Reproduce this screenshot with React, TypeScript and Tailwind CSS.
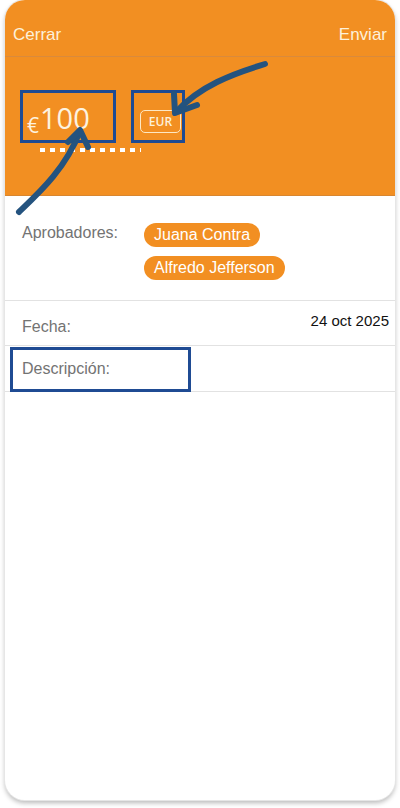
import React from "react";

const ORANGE = "bg-[#f28f22]";

function Chip({ label }: { label: string }) {
  return (
    <span className="inline-flex h-[24px] items-center rounded-full bg-[#f28f22] px-[10px] text-[16px] leading-none text-white">
      {label}
    </span>
  );
}

function Arrows() {
  return (
    <svg
      className="pointer-events-none absolute left-0 top-0"
      width="400"
      height="400"
      viewBox="0 0 400 400"
      fill="none"
      stroke="#24537f"
      strokeWidth="6"
      strokeLinecap="round"
      strokeLinejoin="round"
    >
      <path d="M265 64 C 232 74, 200 86, 176 112" />
      <path d="M174 94 L 175 113 L 197 105" />
      <path d="M19 212 C 40 192, 66 168, 80 131" />
      <path d="M68 142 L 80 130 L 88 147" />
    </svg>
  );
}

export default function App() {
  return (
    <div
      className="relative h-[808px] w-[400px] bg-white"
      style={{ fontFamily: "'Liberation Sans', Arial, sans-serif" }}
    >
      <div className="mx-[5px] flex h-[800px] flex-col overflow-hidden rounded-[20px] bg-white shadow-[0_3px_5px_rgba(0,0,0,0.28)] ring-1 ring-[#e6e6e6]">
        <div className={`${ORANGE} flex h-[57px] items-center justify-between border-b border-[#d98a3c] px-[8px] pt-[14px] text-[17px] text-[#fdf1da]`}>
          <span>Cerrar</span>
          <span>Enviar</span>
        </div>
        <div className={`${ORANGE} relative h-[139px] border-b border-[#d88630] font-['Open_Sans',sans-serif]`}>
          <div className="absolute left-[22px] top-[46px] flex items-end text-[#fdf3e0]">
            <span className="-mb-[4px] text-[21px] leading-none">€</span>
            <span className="ml-[1px] text-[29px] leading-none">100</span>
          </div>
          <div className="absolute left-[135px] top-[53px] flex h-[23px] w-[41px] items-center justify-center rounded-[5px] border border-[#fde8c4] text-[12px] font-semibold text-[#fdf1da]">
            EUR
          </div>
          <div className="absolute left-[35px] top-[91px] h-[4px] w-[101px] bg-[repeating-linear-gradient(90deg,#ffffff_0_5px,transparent_5px_10px)]" />
        </div>
        <div className="flex items-start border-b border-[#e2e2e2] pb-[20px] pl-[17px] pt-[25px]">
          <span className="w-[122px] text-[16px] text-[#737373]">Aprobadores:</span>
          <div className="mt-[2px] flex flex-col items-start gap-[9px]">
            <Chip label="Juana Contra" />
            <Chip label="Alfredo Jefferson" />
          </div>
        </div>
        <div className="flex h-[45px] items-start justify-between border-b border-[#e2e2e2] pl-[17px] pr-[6px]">
          <span className="mt-[14px] text-[16px] text-[#737373]">Fecha:</span>
          <span className="mt-[9px] text-[15px] text-[#111111]">24 oct 2025</span>
        </div>
        <div className="flex h-[46px] items-center border-b border-[#e2e2e2] pl-[17px]">
          <span className="text-[16px] text-[#737373]">Descripción:</span>
        </div>
      </div>
      <div className="pointer-events-none absolute left-[20px] top-[90px] h-[53px] w-[96px] border-[3px] border-[#1f4b93]" />
      <div className="pointer-events-none absolute left-[131px] top-[90px] h-[53px] w-[54px] border-[3px] border-[#1f4b93]" />
      <div className="pointer-events-none absolute left-[10px] top-[347px] h-[45px] w-[181px] border-[3px] border-[#1f4b93]" />
      <Arrows />
    </div>
  );
}
